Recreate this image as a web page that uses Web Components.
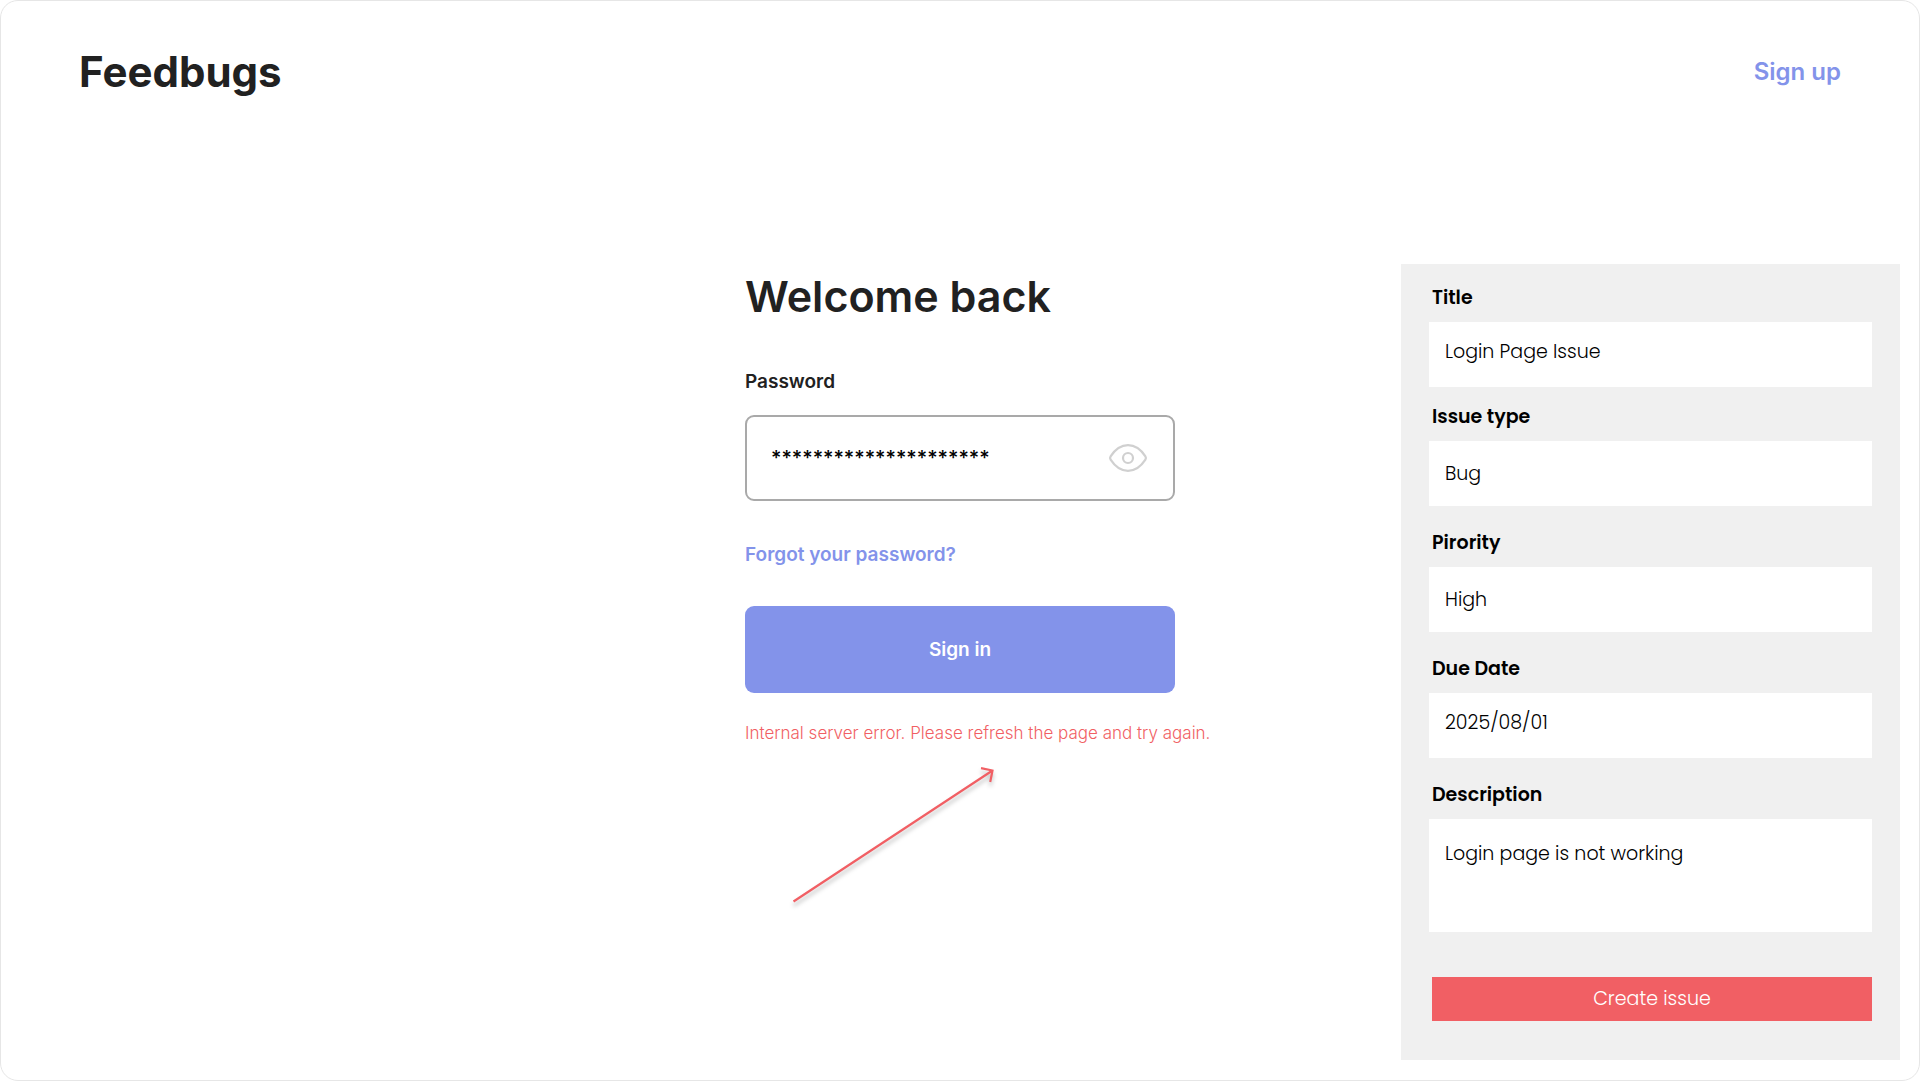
<!DOCTYPE html>
<html lang="en">
<head>
<meta charset="utf-8">
<title>Feedbugs – Sign in</title>
<style>
  html { height: 100%; }
  body {
    margin: 0;
    min-height: 100%;
    display: flex;
    font-family: Inter, "Liberation Sans", sans-serif;
    color: #212121;
    background: #fff;
    --accent: #8393ea;
    --danger: #f15f64;
  }
</style>
</head>
<body>
<feedbugs-page></feedbugs-page>

<script>
  const define = (name, html, setup) => customElements.define(name, class extends HTMLElement {
    constructor() {
      super();
      const template = document.createElement('template');
      template.innerHTML = html;
      this.attachShadow({ mode: 'open' }).append(template.content.cloneNode(true));
    }
    connectedCallback() { if (setup) setup.call(this, this.shadowRoot); }
  });

  // Top bar with the brand and one link
  define('site-header', `
    <style>
      :host { display: flex; align-items: center; justify-content: space-between; padding: 45px 78px 0; }
      .brand { font-size: 42px; line-height: 52px; font-weight: 700; }
      a { font-size: 24px; line-height: 30px; font-weight: 600; color: var(--accent); text-decoration: none; }
    </style>
    <div class="brand"><slot></slot></div>
    <a href="#signup">Sign up</a>`);

  define('password-field', `
    <style>
      :host { display: flex; flex-direction: column; gap: 21px; }
      label { font-size: 19px; line-height: 24px; font-weight: 600; }
      .box {
        display: flex; align-items: center; box-sizing: border-box; height: 86px;
        padding: 0 25px 0 24px; border: 2px solid #a9a9a9; border-radius: 9px;
      }
      input {
        flex: 1; min-width: 0; padding: 0; border: 0; outline: 0; background: none;
        font: 500 20px/30px Inter, "Liberation Sans", sans-serif; color: #000;
      }
      button { display: flex; padding: 0; border: 0; background: none; cursor: pointer; }
    </style>
    <label for="pw">Password</label>
    <div class="box">
      <input id="pw" type="text" autocomplete="off" spellcheck="false" value="*********************">
      <button type="button" aria-label="Show password">
        <svg width="40" height="30" viewBox="0 0 40 30" fill="none" stroke="#d0d0d0" stroke-width="2.2">
          <path d="M2.600 13.400C6 8.200 11.600 2.200 20 2.200s14 6 17.400 11.200c.7 1.100.7 2.100 0 3.200C34 21.800 28.400 27.800 20 27.800S6 21.800 2.600 16.600c-.7-1.100-.7-2.100 0-3.200Z"/>
          <circle cx="20" cy="15" r="5"/>
        </svg>
      </button>
    </div>`);

  define('sign-in-form', `
    <style>
      :host { display: block; }
      form { display: flex; flex-direction: column; }
      h1 { margin: 0 0 48px; font-size: 43px; line-height: 52px; font-weight: 600; }
      a {
        align-self: flex-start; margin: 42px 0 39px; font-size: 19px; line-height: 24px;
        font-weight: 600; color: var(--accent); text-decoration: none;
      }
      button {
        height: 87px; border: 0; border-radius: 9px; background: var(--accent); color: #fff;
        font: 600 19px/24px Inter, "Liberation Sans", sans-serif; cursor: pointer;
      }
      p { margin: 30px 0 0; font-size: 17px; line-height: 20px; font-weight: 300; color: var(--danger); white-space: nowrap; }
    </style>
    <form>
      <h1>Welcome back</h1>
      <password-field></password-field>
      <a href="#forgot">Forgot your password?</a>
      <button type="button">Sign in</button>
      <p role="alert">Internal server error. Please refresh the page and try again.</p>
    </form>`);

  // Annotation arrow that points up at the error message
  define('note-arrow', `
    <style>
      :host { display: block; }
      svg { display: block; filter: drop-shadow(0 4px 2px rgba(0, 0, 0, .25)); }
    </style>
    <svg width="212" height="156" viewBox="0 0 212 156" fill="none" stroke="#f15f64" stroke-width="2.2" aria-hidden="true">
      <path d="M4.500 141.500 203.500 10.500M192 8.200 203.500 10.500 201.200 22"/>
    </svg>`);

  // Labelled box: one line of text, a drop-down, or a block of text
  define('issue-field', `
    <style>
      :host { display: flex; flex-direction: column; gap: 9px; }
      label { padding-left: 3px; font-size: 19px; line-height: 30px; font-weight: 600; }
      input, select, textarea {
        display: block; box-sizing: border-box; width: 100%; height: 65px; margin: 0;
        padding: 0 16px; border: 0; border-radius: 0; outline: 0; appearance: none; resize: none;
        background: #fff; color: #000; font: 300 19px/30px Poppins, Inter, sans-serif;
      }
      input { padding-bottom: 6px; }
      textarea { height: 113px; padding-top: 20px; overflow: hidden; }
    </style>
    <label for="control"></label>`, function (root) {
      const kind = this.getAttribute('kind') || 'input';
      const value = this.getAttribute('value');
      const control = document.createElement(kind);
      control.id = 'control';
      if (kind === 'select') control.add(new Option(value, value, true, true));
      else if (kind === 'textarea') control.textContent = value;
      else control.setAttribute('value', value);
      root.querySelector('label').textContent = this.getAttribute('label');
      root.append(control);
    });

  define('issue-panel', `
    <style>
      :host { display: block; background: #f0f0f0; color: #000; font-family: Poppins, Inter, sans-serif; }
      form { display: flex; flex-direction: column; gap: 22px; padding: 19px 28px 39px; }
      .summary { display: flex; flex-direction: column; gap: 15px; }
      button {
        height: 44px; margin: 23px 0 0 3px; padding: 0; border: 0; background: var(--danger); color: #fff;
        font: 300 19px/30px Poppins, Inter, sans-serif; cursor: pointer;
      }
    </style>
    <form>
      <div class="summary">
        <issue-field label="Title" value="Login Page Issue"></issue-field>
        <issue-field label="Issue type" kind="select" value="Bug"></issue-field>
      </div>
      <issue-field label="Pirority" kind="select" value="High"></issue-field>
      <issue-field label="Due Date" value="2025/08/01"></issue-field>
      <issue-field label="Description" kind="textarea" value="Login page is not working"></issue-field>
      <button type="button">Create issue</button>
    </form>`);

  define('feedbugs-page', `
    <style>
      :host {
        display: flex; flex: 1; flex-direction: column; box-sizing: border-box;
        border: 1px solid #e6e6e6; border-radius: 18px;
      }
      main {
        display: grid; grid-template-columns: minmax(0, 1fr) 430px minmax(0, 1fr);
        align-items: start; padding: 166px 0 20px;
      }
      .login { grid-column: 2; padding-top: 6px; }
      note-arrow { margin: 17px 0 0 44px; }
      issue-panel { grid-column: 3; justify-self: end; width: 100%; max-width: 499px; margin-right: 19px; }
    </style>
    <site-header>Feedbugs</site-header>
    <main>
      <div class="login">
        <sign-in-form></sign-in-form>
        <note-arrow></note-arrow>
      </div>
      <issue-panel></issue-panel>
    </main>`);
</script>
</body>
</html>
